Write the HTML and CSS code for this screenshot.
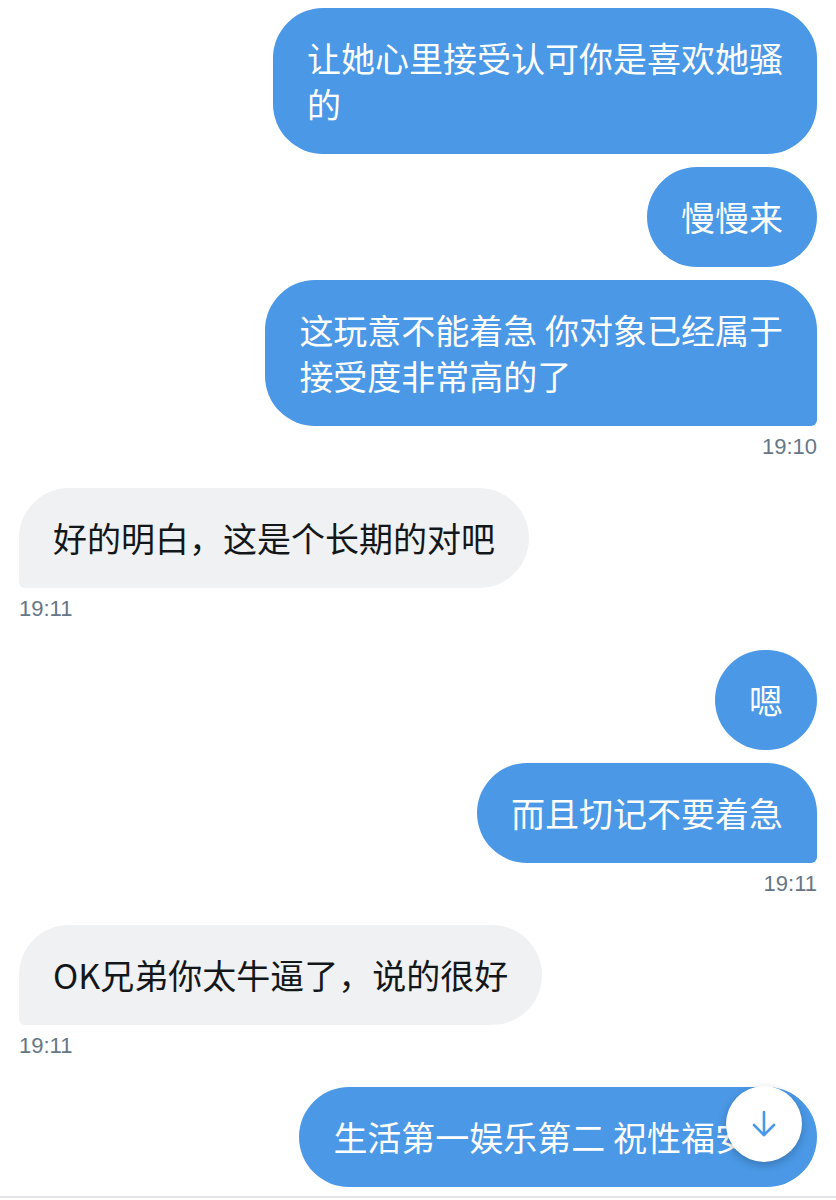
FILE: index.html
```html
<!DOCTYPE html>
<html lang="zh">
<head>
  <meta charset="UTF-8">
  <meta name="viewport" content="width=device-width, initial-scale=1.0">
  <title>私信</title>
  <link rel="stylesheet" href="styles.css">
</head>
<body>

<div class="conversation">
  <div class="group sent">
    <div class="bubble">让她心里接受认可你是喜欢她骚<br>的</div>
    <div class="bubble">慢慢来</div>
    <div class="bubble last">这玩意不能着急 你对象已经属于<br>接受度非常高的了</div>
    <div class="time">19:10</div>
  </div>

  <div class="group received">
    <div class="bubble last">好的明白，这是个长期的对吧</div>
    <div class="time">19:11</div>
  </div>

  <div class="group sent">
    <div class="bubble">嗯</div>
    <div class="bubble last">而且切记不要着急</div>
    <div class="time">19:11</div>
  </div>

  <div class="group received">
    <div class="bubble last">OK兄弟你太牛逼了，说的很好</div>
    <div class="time">19:11</div>
  </div>

  <div class="group sent">
    <div class="bubble">生活第一娱乐第二 祝性福安康</div>
  </div>

  <button class="scroll-down" aria-label="滚动到底部">
    <svg width="30" height="30" viewBox="0 0 30 30" fill="none" stroke="#4a98e6" stroke-width="2.6" stroke-linecap="round" stroke-linejoin="round">
      <path d="M15 3 V26"/>
      <path d="M5 16 L15 26 L25 16"/>
    </svg>
  </button>
</div>

<div class="composer"></div>

</body>
</html>
```

FILE: styles.css
```css
body {
  margin: 0;
  background: #ffffff;
  font-family: "Noto Sans CJK SC", "Noto Sans", sans-serif;
  color: #14171a;
}
.conversation {
  position: relative;
  padding: 8px 19px 0;
  height: 1196px;
  box-sizing: border-box;
}
.group {
  display: flex;
  flex-direction: column;
  gap: 13px;
  margin-bottom: 28px;
}
.sent {
  align-items: flex-end;
}
.received {
  align-items: flex-start;
}
.bubble {
  font-size: 34px;
  line-height: 46px;
  padding: 27px 34px;
  border-radius: 50px;
  white-space: nowrap;
}
.sent .bubble {
  background: #4a98e6;
  color: #ffffff;
}
.received .bubble {
  background: #eff1f3;
  color: #14171a;
}
.sent .bubble.last {
  border-bottom-right-radius: 6px;
}
.received .bubble.last {
  border-bottom-left-radius: 6px;
}
.time {
  font-family: "Liberation Sans", Arial, sans-serif;
  font-size: 22px;
  line-height: 26px;
  color: #657786;
  margin-top: -5px;
}
.scroll-down {
  position: absolute;
  right: 34px;
  top: 1086px;
  width: 76px;
  height: 76px;
  border: none;
  border-radius: 50%;
  background: #ffffff;
  box-shadow: 0 3px 8px rgba(0, 0, 0, 0.22);
  display: flex;
  align-items: center;
  justify-content: center;
  padding: 0;
  cursor: pointer;
}
.composer {
  border-top: 2px solid #e3e5e8;
  height: 2px;
}
```
